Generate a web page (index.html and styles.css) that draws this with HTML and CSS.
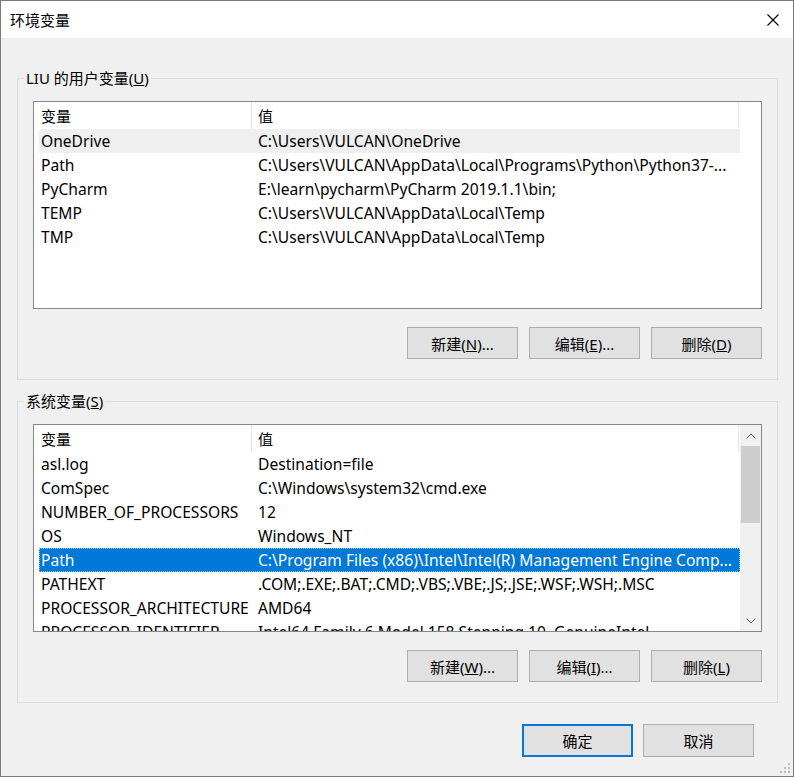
FILE: index.html
```html
<!DOCTYPE html>
<html lang="zh-CN">
<head>
  <meta charset="UTF-8" />
  <title>环境变量</title>
  <link rel="stylesheet" href="styles.css">
</head>
<body>
  <div class="window">
    <div class="titlebar">
      <span class="title">环境变量</span>
      <svg class="close" width="12" height="12" viewBox="0 0 12 12">
        <path d="M0.5 0.5L11.5 11.5M11.5 0.5L0.5 11.5" stroke="#000" stroke-width="1.1" fill="none" />
      </svg>
    </div>

    <div class="content">
      <fieldset class="group">
        <legend>LIU 的用户变量(<u>U</u>)</legend>
        <div class="list">
          <div class="list-main">
            <div class="list-head">
              <div class="head-name">变量</div>
              <div class="head-value">值</div>
            </div>
            <div class="row hover"><div class="cell-name">OneDrive</div><div class="cell-value">C:\Users\VULCAN\OneDrive</div></div>
            <div class="row"><div class="cell-name">Path</div><div class="cell-value">C:\Users\VULCAN\AppData\Local\Programs\Python\Python37-...</div></div>
            <div class="row"><div class="cell-name">PyCharm</div><div class="cell-value">E:\learn\pycharm\PyCharm 2019.1.1\bin;</div></div>
            <div class="row"><div class="cell-name">TEMP</div><div class="cell-value">C:\Users\VULCAN\AppData\Local\Temp</div></div>
            <div class="row"><div class="cell-name">TMP</div><div class="cell-value">C:\Users\VULCAN\AppData\Local\Temp</div></div>
          </div>
        </div>
        <div class="buttons">
          <button class="btn">新建(<u>N</u>)...</button>
          <button class="btn">编辑(<u>E</u>)...</button>
          <button class="btn">删除(<u>D</u>)</button>
        </div>
      </fieldset>

      <fieldset class="group system">
        <legend>系统变量(<u>S</u>)</legend>
        <div class="list">
          <div class="list-main">
            <div class="list-head">
              <div class="head-name">变量</div>
              <div class="head-value">值</div>
            </div>
            <div class="row"><div class="cell-name">asl.log</div><div class="cell-value">Destination=file</div></div>
            <div class="row"><div class="cell-name">ComSpec</div><div class="cell-value">C:\Windows\system32\cmd.exe</div></div>
            <div class="row"><div class="cell-name">NUMBER_OF_PROCESSORS</div><div class="cell-value">12</div></div>
            <div class="row"><div class="cell-name">OS</div><div class="cell-value">Windows_NT</div></div>
            <div class="row selected"><div class="cell-name">Path</div><div class="cell-value">C:\Program Files (x86)\Intel\Intel(R) Management Engine Comp...</div></div>
            <div class="row"><div class="cell-name">PATHEXT</div><div class="cell-value">.COM;.EXE;.BAT;.CMD;.VBS;.VBE;.JS;.JSE;.WSF;.WSH;.MSC</div></div>
            <div class="row"><div class="cell-name">PROCESSOR_ARCHITECTURE</div><div class="cell-value">AMD64</div></div>
            <div class="row"><div class="cell-name">PROCESSOR_IDENTIFIER</div><div class="cell-value">Intel64 Family 6 Model 158 Stepping 10, GenuineIntel</div></div>
          </div>
          <div class="scrollbar">
            <div class="arrow">
              <svg width="10" height="6" viewBox="0 0 10 6"><path d="M0.5 5.5L5 1L9.5 5.5" stroke="#606060" fill="none" /></svg>
            </div>
            <div class="track"><div class="thumb"></div></div>
            <div class="arrow">
              <svg width="10" height="6" viewBox="0 0 10 6"><path d="M0.5 0.5L5 5L9.5 0.5" stroke="#606060" fill="none" /></svg>
            </div>
          </div>
        </div>
        <div class="buttons">
          <button class="btn">新建(<u>W</u>)...</button>
          <button class="btn">编辑(<u>I</u>)...</button>
          <button class="btn">删除(<u>L</u>)</button>
        </div>
      </fieldset>

      <div class="footer">
        <button class="btn btn-dialog default">确定</button>
        <button class="btn btn-dialog">取消</button>
      </div>
    </div>

    <svg class="grip" width="12" height="12" viewBox="0 0 12 12" fill="#bcbcbc">
      <rect x="9" y="1" width="2" height="2" />
      <rect x="5" y="5" width="2" height="2" />
      <rect x="9" y="5" width="2" height="2" />
      <rect x="1" y="9" width="2" height="2" />
      <rect x="5" y="9" width="2" height="2" />
      <rect x="9" y="9" width="2" height="2" />
    </svg>
  </div>
</body>
</html>
```

FILE: styles.css
```css
body {
  margin: 0;
  background: #fff;
  font-family: "Noto Sans", "Noto Sans CJK SC", sans-serif;
  font-size: 15px;
  color: #000;
}
.window {
  position: relative;
  width: 794px;
  height: 777px;
  box-sizing: border-box;
  border: 1px solid #7a7a7a;
  display: flex;
  flex-direction: column;
}
.titlebar {
  height: 37px;
  background: #fff;
  display: flex;
  align-items: center;
  justify-content: space-between;
  padding: 0 14px 0 9px;
}
.title {
  line-height: 20px;
}
.content {
  flex: 1;
  background: #f0f0f0;
  padding: 30px 15px 0 16px;
}
.group {
  margin: 0;
  padding: 13px 15px 20px 15px;
  border: 1px solid #dcdcdc;
  min-width: 0;
}
.group legend {
  margin-left: -9px;
  padding: 0 2px;
  line-height: 20px;
}
.system {
  margin-top: 11px;
}
.list {
  height: 206px;
  border: 1px solid #828790;
  background: #fff;
  display: flex;
  overflow: hidden;
}
.list-main {
  width: 706px;
  overflow: hidden;
}
.list-head {
  display: flex;
  height: 27px;
  line-height: 28px;
}
.head-name {
  width: 210px;
  padding-left: 7px;
  border-right: 1px solid #e5e5e5;
}
.head-value {
  width: 480px;
  padding-left: 6px;
  border-right: 1px solid #e5e5e5;
}
.row {
  display: grid;
  grid-template-columns: 213px 487px;
  margin-left: 5px;
  height: 24px;
  line-height: 24px;
  font-size: 15.6px;
  white-space: nowrap;
}
.row.hover {
  background: #efefef;
}
.row.selected {
  background: #0078d7;
  color: #fff;
  outline: 1px dotted #9ccbf2;
  outline-offset: -1px;
}
.cell-name {
  padding-left: 2px;
  overflow: hidden;
}
.cell-value {
  padding-left: 6px;
  overflow: hidden;
}
.scrollbar {
  width: 21px;
  margin-left: auto;
  background: #f0f0f0;
  display: flex;
  flex-direction: column;
}
.arrow {
  height: 21px;
  display: flex;
  align-items: center;
  justify-content: center;
}
.track {
  flex: 1;
}
.thumb {
  height: 77px;
  margin: 0 1px;
  background: #cdcdcd;
}
.buttons {
  display: flex;
  justify-content: flex-end;
  gap: 11px;
  margin-top: 18px;
}
.btn {
  width: 111px;
  height: 32px;
  padding: 0;
  background: #e1e1e1;
  border: 1px solid #adadad;
  font-family: inherit;
  font-size: 15px;
  color: #000;
}
.footer {
  display: flex;
  justify-content: flex-end;
  gap: 10px;
  margin-top: 21px;
  padding-right: 24px;
}
.btn-dialog {
  height: 33px;
}
.default {
  border: 2px solid #0078d7;
}
.grip {
  position: absolute;
  right: 2px;
  bottom: 2px;
}
```
